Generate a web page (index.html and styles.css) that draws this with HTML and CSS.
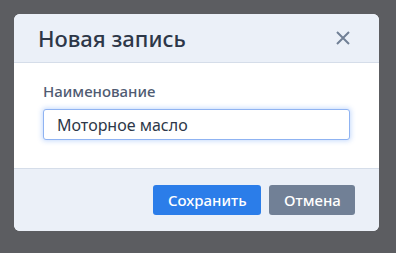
FILE: index.html
```html
<!DOCTYPE html>
<html lang="ru">
<head>
    <meta charset="UTF-8">
    <meta name="viewport" content="width=device-width, initial-scale=1.0">
    <title>Новая запись</title>
    <link rel="stylesheet" href="styles.css">
</head>
<body>
    <div class="modal">
        <div class="modal-header">
            <h2>Новая запись</h2>
            <button type="button" class="close-button" aria-label="Закрыть">
                <svg width="14" height="14" viewBox="0 0 14 14">
                    <path d="M1 1 L13 13 M13 1 L1 13" stroke="#718096" stroke-width="2" fill="none"/>
                </svg>
            </button>
        </div>
        <div class="modal-body">
            <label for="name">Наименование</label>
            <input type="text" id="name" value="Моторное масло">
        </div>
        <div class="modal-footer">
            <button type="button" class="btn btn-primary">Сохранить</button>
            <button type="button" class="btn btn-secondary">Отмена</button>
        </div>
    </div>
</body>
</html>
```

FILE: styles.css
```css
body {
    font-family: "Noto Sans", "Open Sans", sans-serif;
    background-color: #5c5d61;
    margin: 0;
    padding: 14px;
}
.modal {
    width: 365px;
    background-color: #fff;
    border-radius: 6px;
    overflow: hidden;
}
.modal-header {
    display: flex;
    justify-content: space-between;
    align-items: center;
    height: 48px;
    padding: 0 29px 0 24px;
    background-color: #ebf0f8;
    border-bottom: 1px solid #d5dde9;
}
.modal-header h2 {
    margin: 0;
    font-size: 22px;
    font-weight: 500;
    color: #2d3748;
}
.close-button {
    display: flex;
    padding: 0;
    border: none;
    background: none;
    cursor: pointer;
}
.modal-body {
    padding: 18px 29px 28px;
}
.modal-body label {
    display: block;
    margin-bottom: 8px;
    font-size: 15px;
    font-weight: 500;
    color: #4f5b72;
}
.modal-body input {
    display: block;
    width: 100%;
    height: 31px;
    padding: 0 13px;
    box-sizing: border-box;
    border: 1px solid #8fb3f2;
    border-radius: 3px;
    box-shadow: 0 0 5px 1px rgba(66, 133, 244, 0.3);
    font-family: inherit;
    font-size: 16px;
    color: #2d3748;
    outline: none;
}
.modal-footer {
    display: flex;
    justify-content: flex-end;
    gap: 8px;
    padding: 16px 24px 16px;
    background-color: #ebf0f8;
    border-top: 1px solid #d5dde9;
}
.btn {
    height: 30px;
    padding: 0 15px;
    border: none;
    border-radius: 3px;
    font-family: inherit;
    font-size: 15px;
    font-weight: 500;
    color: #fff;
    cursor: pointer;
}
.btn-primary {
    width: 108px;
    background-color: #2b7de9;
}
.btn-secondary {
    width: 86px;
    background-color: #718096;
}
```
